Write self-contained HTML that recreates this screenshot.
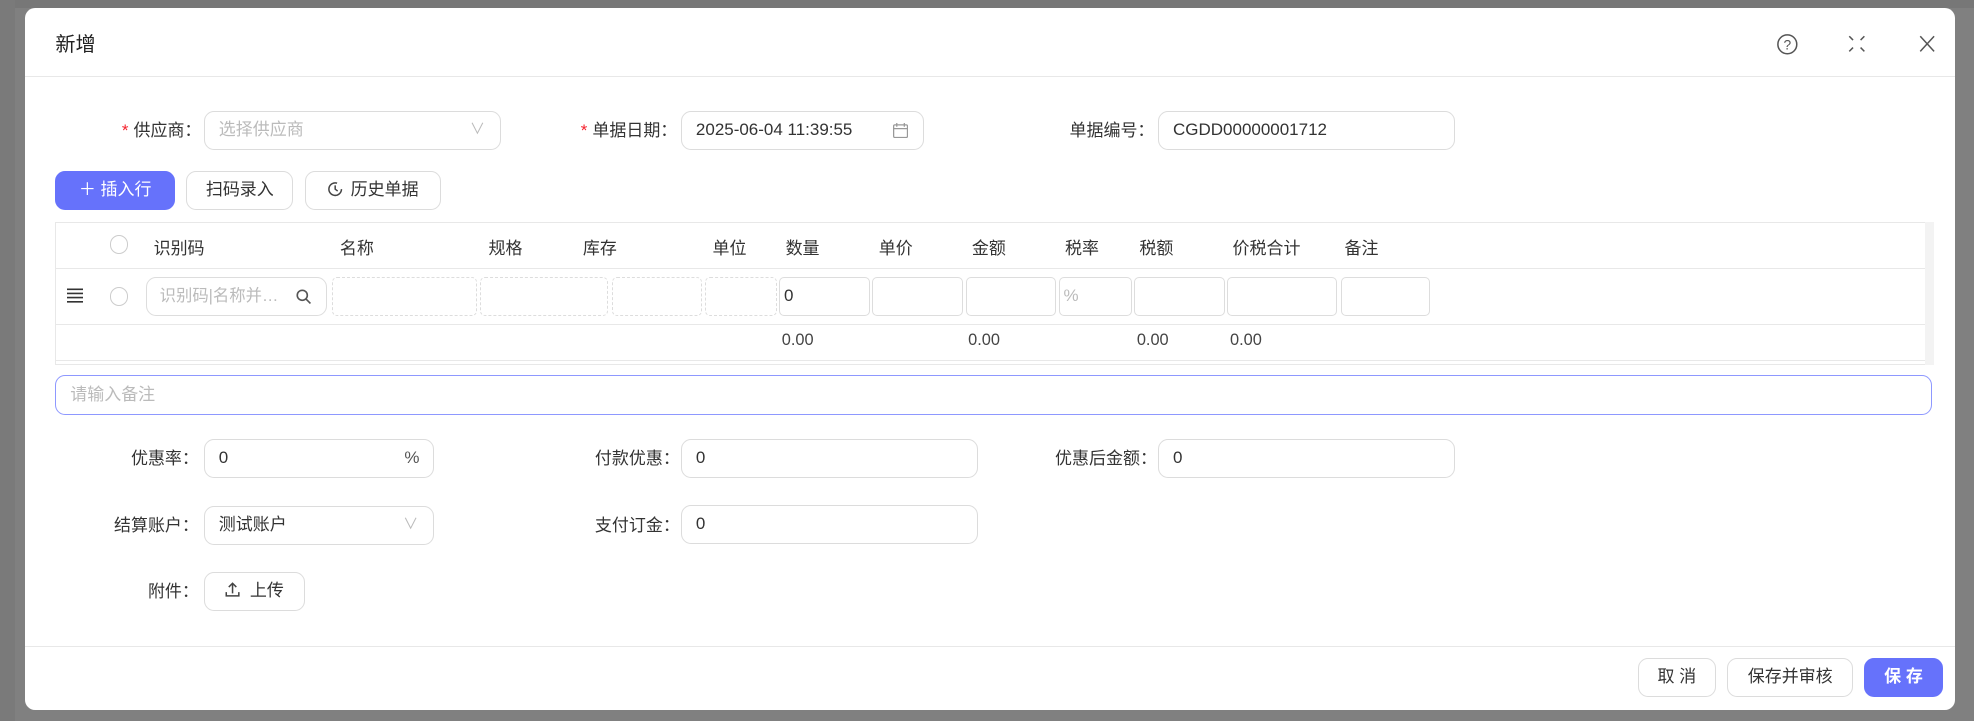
<!DOCTYPE html>
<html><head><meta charset="utf-8"><style>
*{box-sizing:border-box;margin:0;padding:0}
html,body{width:1974px;height:721px;overflow:hidden;background:#808080}
#w{position:absolute;left:0;top:0;width:1568px;height:573px;zoom:1.25893;font-family:"Liberation Sans","Noto Sans CJK SC",sans-serif;font-size:13.5px;color:#333}
.a{position:absolute}
.modal{left:20px;top:6px;width:1533px;height:558px;background:#fff;border-radius:8px}
.inp{position:absolute;border:1px solid #dcdcdc;border-radius:8px;height:31px;line-height:29px;padding-left:11px;font-size:13.5px;color:#333;background:#fff}
.ph{color:#bbb}
.lbl{position:absolute;text-align:right;font-size:13.5px;color:#333;line-height:31px}
.req{color:#f5222d;margin-right:4px}
.btn{position:absolute;border:1px solid #dcdcdc;border-radius:8px;height:31px;line-height:29px;text-align:center;font-size:13.5px;color:#333;background:#fff}
.pri{background:#6672fb;border-color:#6672fb;color:#fff}
.th{position:absolute;top:186px;font-size:13.5px;color:#333}
.cell{position:absolute;top:220px;height:31px;border:1px solid #ddd;border-radius:4px;line-height:29px;padding-left:3px}
.dash{border:1px dashed #ddd}
.sum{position:absolute;top:263px;font-size:13px;color:#444}
.circ{position:absolute;width:15px;height:15px;border:1px solid #ccc;border-radius:50%;left:87px}
</style></head><body><div id="w">
<div class="a" style="left:0;top:0;width:1568px;height:6px;background:#777"></div>
<div class="a" style="left:0;top:0;width:12px;height:573px;background:#7a7a7a"></div>
<div class="a modal"></div>
<div class="a" style="left:44px;top:22px;font-size:16px;color:#222">新增</div>
<svg class="a" style="left:1411px;top:26px" width="18" height="18" viewBox="0 0 18 18"><circle cx="9" cy="9" r="7.5" fill="none" stroke="#555" stroke-width="1.2"/><text x="9" y="13" font-size="11" text-anchor="middle" fill="#555" font-family="Liberation Sans">?</text></svg>
<svg class="a" style="left:1468px;top:28px" width="14" height="14" viewBox="0 0 14 14" fill="none" stroke="#555" stroke-width="1.2"><path d="M1 1l3 3M13 1l-3 3M1 13l3-3M13 13l-3-3"/></svg>
<svg class="a" style="left:1524px;top:28px" width="13" height="14" viewBox="0 0 13 14" fill="none" stroke="#555" stroke-width="1.2"><path d="M1 1l11 12M12 1L1 13"/></svg>
<div class="a" style="left:20px;top:60px;width:1533px;height:1px;background:#e8e8e8"></div>

<div class="lbl" style="left:60px;top:88px;width:100px"><span class="req">*</span>供应商：</div>
<div class="inp ph" style="left:162px;top:88px;width:236px">选择供应商<span style="position:absolute;right:12px;color:#bbb;font-size:12px">∨</span></div>
<div class="lbl" style="left:420px;top:88px;width:118px"><span class="req">*</span>单据日期：</div>
<div class="inp" style="left:541px;top:88px;width:193px">2025-06-04 11:39:55
<svg style="position:absolute;right:12px;top:9px" width="12" height="12" viewBox="0 0 12 12" fill="none" stroke="#999"><rect x="0.5" y="1.5" width="11" height="10" rx="1"/><path d="M0.5 4.5h11M3 0v3M9 0v3"/></svg></div>
<div class="lbl" style="left:800px;top:88px;width:117px">单据编号：</div>
<div class="inp" style="left:920px;top:88px;width:236px">CGDD00000001712</div>

<div class="btn pri" style="left:44px;top:136px;width:95px">＋ 插入行</div>
<div class="btn" style="left:148px;top:136px;width:85px">扫码录入</div>
<div class="btn" style="left:242px;top:136px;width:108px"><svg style="vertical-align:-2px;margin-right:6px" width="13" height="13" viewBox="0 0 13 13" fill="none" stroke="#444" stroke-width="1.2"><path d="M11.5 6.5A5 5 0 1 1 8 1.7"/><path d="M6.5 3.5v3l2 1.5"/></svg>历史单据</div>

<div class="a" style="left:44px;top:176px;width:1492px;height:114px;border:1px solid #e8e8e8"></div>
<div class="a" style="left:1529px;top:176px;width:7px;height:114px;background:#f3f3f3"></div>
<div class="a" style="left:44px;top:213px;width:1485px;height:1px;background:#e8e8e8"></div>
<div class="a" style="left:44px;top:257px;width:1485px;height:1px;background:#e8e8e8"></div>
<div class="a" style="left:44px;top:286px;width:1485px;height:1px;background:#e8e8e8"></div>
<div class="circ" style="top:187px"></div>
<div class="th" style="left:122px">识别码</div><div class="th" style="left:270px">名称</div><div class="th" style="left:388px">规格</div><div class="th" style="left:463px">库存</div><div class="th" style="left:566px">单位</div><div class="th" style="left:624px">数量</div><div class="th" style="left:698px">单价</div><div class="th" style="left:772px">金额</div><div class="th" style="left:846px">税率</div><div class="th" style="left:905px">税额</div><div class="th" style="left:979px">价税合计</div><div class="th" style="left:1068px">备注</div>
<svg class="a" style="left:53px;top:229px" width="13" height="12" viewBox="0 0 13 12" stroke="#333" stroke-width="1.3"><path d="M0 1h13M0 4.3h13M0 7.6h13M0 11h13"/></svg>
<div class="circ" style="top:228px"></div>
<div class="cell ph" style="left:116px;width:144px;border-radius:8px;padding-left:10px;font-size:13px">识别码|名称并…<svg style="position:absolute;right:12px;top:9px" width="12" height="12" viewBox="0 0 12 12" fill="none" stroke="#555" stroke-width="1.3"><circle cx="5" cy="5" r="4"/><path d="M8 8l3.5 3.5"/></svg></div>
<div class="cell dash" style="left:264px;width:115px"></div>
<div class="cell dash" style="left:381px;width:102px"></div>
<div class="cell dash" style="left:486px;width:72px"></div>
<div class="cell dash" style="left:560px;width:57px"></div>
<div class="cell" style="left:619px;width:72px">0</div>
<div class="cell" style="left:693px;width:72px"></div>
<div class="cell" style="left:767px;width:72px"></div>
<div class="cell ph" style="left:841px;width:58px">%</div>
<div class="cell" style="left:901px;width:72px"></div>
<div class="cell" style="left:975px;width:87px"></div>
<div class="cell" style="left:1065px;width:71px"></div>
<div class="sum" style="left:621px">0.00</div><div class="sum" style="left:769px">0.00</div><div class="sum" style="left:903px">0.00</div><div class="sum" style="left:977px">0.00</div>

<div class="inp ph" style="left:44px;top:298px;width:1491px;height:32px;border-color:#8e98ff;line-height:30px">请输入备注</div>

<div class="lbl" style="left:60px;top:349px;width:98px">优惠率：</div>
<div class="inp" style="left:162px;top:349px;width:183px">0<span style="position:absolute;right:11px;color:#555">%</span></div>
<div class="lbl" style="left:420px;top:349px;width:120px">付款优惠：</div>
<div class="inp" style="left:541px;top:349px;width:236px">0</div>
<div class="lbl" style="left:800px;top:349px;width:119px">优惠后金额：</div>
<div class="inp" style="left:920px;top:349px;width:236px">0</div>
<div class="lbl" style="left:60px;top:402px;width:98px">结算账户：</div>
<div class="inp" style="left:162px;top:402px;width:183px">测试账户<span style="position:absolute;right:12px;color:#bbb;font-size:12px">∨</span></div>
<div class="lbl" style="left:420px;top:402px;width:120px">支付订金：</div>
<div class="inp" style="left:541px;top:401px;width:236px">0</div>
<div class="lbl" style="left:60px;top:454px;width:98px">附件：</div>
<div class="btn" style="left:162px;top:454px;width:80px"><svg style="vertical-align:-1px;margin-right:8px" width="12" height="12" viewBox="0 0 12 12" fill="none" stroke="#444" stroke-width="1.2"><path d="M6 9V1M3 4l3-3 3 3M1 8v3h10V8"/></svg>上传</div>

<div class="a" style="left:20px;top:513px;width:1533px;height:1px;background:#e8e8e8"></div>
<div class="btn" style="left:1301px;top:523px;width:62px">取 消</div>
<div class="btn" style="left:1372px;top:523px;width:100px">保存并审核</div>
<div class="btn pri" style="left:1481px;top:523px;width:62px;font-weight:bold">保 存</div>
</div></body></html>
